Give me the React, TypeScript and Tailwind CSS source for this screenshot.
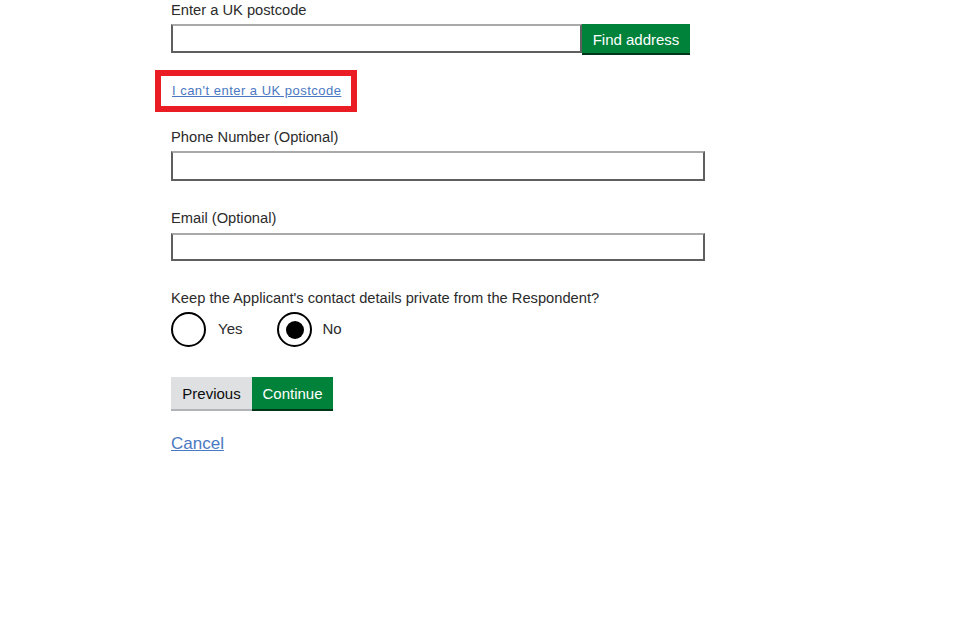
import { useState } from "react";

export default function App() {
  const [priv, setPriv] = useState<"yes" | "no">("no");

  const inputCls =
    "block w-full border-2 border-[#5f5f5f] border-t-[#a9a9a9] bg-white px-2 text-[14px] outline-none";

  return (
    <div className="min-h-screen bg-white font-['Liberation_Sans',Arial,sans-serif] text-[#2b2b2b]">
      <div className="ml-[171px] flex w-[534px] flex-col">
        <label className="mt-[2px] text-[14.7px] leading-[16px]">Enter a UK postcode</label>
        <div className="mt-[6px] flex h-[29px] w-[519px]">
          <input className={inputCls + " h-full w-[411px]"} />
          <button className="h-full w-[108px] shrink-0 bg-[#00823b] pt-[3px] text-[15px] text-white shadow-[0_2px_0_#003618]">
            Find address
          </button>
        </div>

        <div className="-ml-[16px] mt-[17px] flex h-[42px] w-[202px] items-center border-[6px] border-[#ea1d25] pl-[11px]">
          <a href="#" className="text-[13px] tracking-[0.48px] text-[#4a78c2] underline">
            I can't enter a UK postcode
          </a>
        </div>

        <label className="mt-[17px] text-[14.7px] leading-[16px]">Phone Number (Optional)</label>
        <input className={inputCls + " mt-[6px] h-[30px]"} />

        <label className="mt-[29px] text-[14.7px] leading-[16px]">Email (Optional)</label>
        <input className={inputCls + " mt-[7px] h-[28px]"} />

        <p className="mt-[29px] text-[14.7px] leading-[16px]">
          Keep the Applicant's contact details private from the Respondent?
        </p>
        <div className="mt-[6px] flex h-[35px] items-center">
          <button onClick={() => setPriv("yes")} className="flex items-center">
            <span className="flex h-[35px] w-[35px] items-center justify-center rounded-full border-2 border-black">
              {priv === "yes" && <span className="h-[18px] w-[18px] rounded-full bg-black" />}
            </span>
            <span className="ml-[12px] text-[15px]">Yes</span>
          </button>
          <button onClick={() => setPriv("no")} className="ml-[35px] flex items-center">
            <span className="flex h-[35px] w-[35px] items-center justify-center rounded-full border-2 border-black">
              {priv === "no" && <span className="h-[18px] w-[18px] rounded-full bg-black" />}
            </span>
            <span className="ml-[10px] text-[15px]">No</span>
          </button>
        </div>

        <div className="mt-[30px] flex">
          <button className="h-[32px] w-[81px] bg-[#dee0e2] pt-[2px] text-[15px] text-[#0b0c0c] shadow-[0_2px_0_#b0b4b8]">
            Previous
          </button>
          <button className="h-[32px] w-[81px] bg-[#00823b] pt-[2px] text-[15px] text-white shadow-[0_2px_0_#003618]">
            Continue
          </button>
        </div>

        <a href="#" className="mt-[25px] w-fit text-[17px] leading-[19px] text-[#4a78c2] underline">
          Cancel
        </a>
      </div>
    </div>
  );
}
